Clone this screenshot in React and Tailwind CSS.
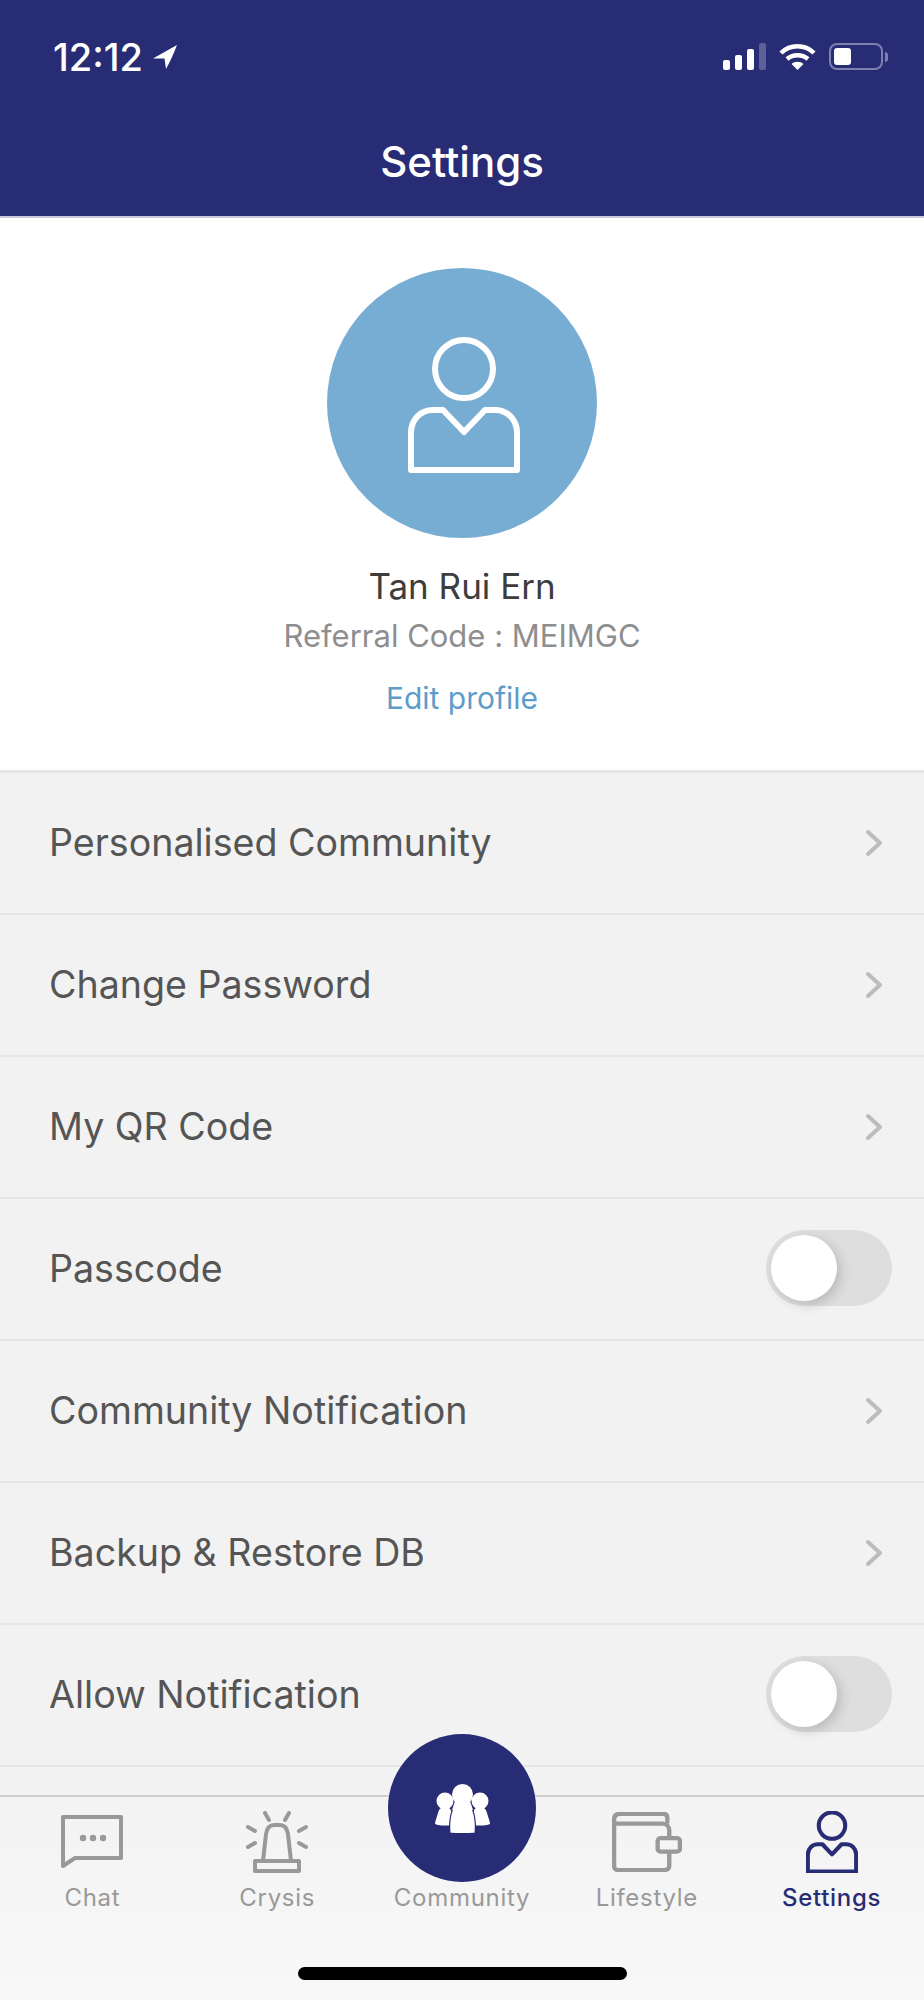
import React from 'react'

const sans = 'font-["Inter","Liberation_Sans",sans-serif]'

const rows = [
  { label: 'Personalised Community' },
  { label: 'Change Password' },
  { label: 'My QR Code' },
  { label: 'Passcode', toggle: true },
  { label: 'Community Notification' },
  { label: 'Backup & Restore DB' },
  { label: 'Allow Notification', toggle: true },
]

const PersonIcon = ({ className, strokeWidth = 6 }) => (
  <svg viewBox="0 0 112 136" fill="none" stroke="currentColor" strokeWidth={strokeWidth} strokeLinejoin="round" className={className}>
    <circle cx="56" cy="32" r="29" />
    <path d="M3 133V96c0-13 9-23 22-23h10l21 22 21-22h10c13 0 22 10 22 23v37z" />
  </svg>
)

const ChatIcon = () => (
  <svg viewBox="0 0 62 54" className="w-[62px] h-[54px] mb-[4px] text-[#999]" fill="none">
    <path d="M2 2h58v41H14L2 51z" stroke="currentColor" strokeWidth="4" strokeLinejoin="round" />
    <circle cx="22" cy="23" r="3.2" fill="currentColor" />
    <circle cx="32" cy="23" r="3.2" fill="currentColor" />
    <circle cx="42" cy="23" r="3.2" fill="currentColor" />
  </svg>
)

const SirenIcon = () => (
  <svg viewBox="0 0 64 62" className="w-[64px] h-[62px] text-[#999]" fill="none" stroke="currentColor" strokeWidth="4" strokeLinecap="round">
    <path d="M18 50l3-27c1-6 4-9 8-9h6c4 0 7 3 8 9l3 27" />
    <rect x="10" y="50" width="44" height="10" strokeLinejoin="round" />
    <path d="M20 2l4 7M44 2l-4 7M3 16l7 4M61 16l-7 4M3 36l7-4M61 36l-7-4" />
  </svg>
)

const WalletIcon = () => (
  <svg viewBox="0 0 72 62" className="w-[70px] h-[60px] mb-[1px] text-[#999]" fill="none" stroke="currentColor" strokeWidth="4.5" strokeLinejoin="round">
    <path d="M57 12V6c0-2-1-4-4-4H8C4 2 2 4 2 8v48c0 2 2 4 4 4h48c3 0 5-2 5-4V42" />
    <path d="M2 12h50c4 0 7 3 7 7v8" />
    <rect x="47" y="27" width="23" height="14" rx="3" />
  </svg>
)

// three pawn-shaped figures, the middle one in front
const CommunityIcon = () => (
  <svg viewBox="0 0 55 49" className="w-[55px] h-[49px]" fill="white">
    <circle cx="10" cy="17" r="8.5" />
    <path d="M0 40c0-3 2-7 3-11 1-4 3-6 7-6s6 2 7 6 3 8 3 11c-5 2-15 2-20 0z" />
    <circle cx="45" cy="17" r="8.5" />
    <path d="M35 40c0-3 2-7 3-11 1-4 3-6 7-6s6 2 7 6 3 8 3 11c-5 2-15 2-20 0z" />
    <path d="M15 49c-1-8 0-20 4-26h17c4 6 5 18 4 26-5 1-20 1-25 0z" stroke="#282c75" strokeWidth="1.2" />
    <circle cx="27.5" cy="10.5" r="10.5" />
    <path d="M20 17h15l3 9H17z" />
  </svg>
)

const Chevron = () => (
  <svg viewBox="0 0 18 28" className="w-[18px] h-[28px] text-[#bcbcbc]" fill="none" stroke="currentColor" strokeWidth="4" strokeLinecap="round" strokeLinejoin="round">
    <path d="M3 3l12 11L3 25" />
  </svg>
)

const Toggle = () => (
  <div className="relative w-[126px] h-[76px] mb-[2px] rounded-full bg-[#dedede]">
    <div className="absolute left-[5px] top-[5px] w-[66px] h-[66px] rounded-full bg-white shadow-[4px_4px_12px_rgba(0,0,0,0.16)]" />
  </div>
)

const TabItem = ({ icon, label, active }) => (
  <div className="flex-1 flex flex-col items-center">
    <div className="h-[62px] flex items-end">{icon}</div>
    <div className={`mt-[10px] text-[24px] leading-[30px] tracking-[0.7px] ${active ? 'text-[#282c75] font-medium' : 'text-[#999]'}`}>
      {label}
    </div>
  </div>
)

export default function App() {
  return (
    <div className={`relative w-[924px] h-[2000px] overflow-hidden bg-[#f2f2f2] flex flex-col ${sans}`}>
      {/* status bar + title */}
      <header className="h-[218px] shrink-0 bg-[#282c75] border-b-2 border-[#c9cade] text-white">
        <div className="h-[138px] flex items-start justify-between pl-[53px] pr-[36px] pt-[37px]">
          <div className="flex items-center gap-[10px]">
            <span className="text-[38px] leading-[40px] font-medium">12:12</span>
            <svg viewBox="0 0 24 24" className="w-[24px] h-[24px]" fill="white">
              <path d="M24 0L0 13.5h11.5L13 24c3-5 8-16 11-24z" />
            </svg>
          </div>
          <div className="flex items-start gap-[13px] mt-[6px]">
            <div className="flex items-end gap-[5px] h-[27px]">
              <span className="w-[7px] h-[10px] rounded-[2px] bg-white" />
              <span className="w-[7px] h-[15px] rounded-[2px] bg-white" />
              <span className="w-[7px] h-[21px] rounded-[2px] bg-white" />
              <span className="w-[7px] h-[27px] rounded-[2px] bg-white/25" />
            </div>
            <svg viewBox="0 0 37 27" className="w-[37px] h-[27px]" fill="none" stroke="white" strokeWidth="4.5">
              <path d="M2 10c9-9 24-9 33 0" />
              <path d="M8 16c6-5 15-5 21 0" />
              <path d="M18.5 27l-6-6c3-3 9-3 12 0z" fill="white" stroke="none" />
            </svg>
            <div className="flex items-center gap-[2px] h-[27px]">
              <div className="w-[54px] h-[27px] rounded-[8px] border-2 border-white/40 p-[3px]">
                <div className="w-[17px] h-full rounded-[3px] bg-white" />
              </div>
              <div className="w-[3px] h-[10px] rounded-r bg-white/40" />
            </div>
          </div>
        </div>
        <h1 className="text-center text-[42px] leading-[48px] font-medium">Settings</h1>
      </header>

      {/* profile */}
      <section className="h-[555px] shrink-0 bg-white border-b-[3px] border-[#e6e6e6] flex flex-col items-center pt-[50px]">
        <div className="w-[270px] h-[270px] rounded-full bg-[#78add3] flex items-center justify-center text-white">
          <PersonIcon className="w-[112px] h-[136px] ml-[4px] mt-[3px]" />
        </div>
        <div className="mt-[26px] text-[35px] leading-[44px] text-[#3d3d3d]">Tan Rui Ern</div>
        <div className="mt-[8px] text-[31px] leading-[40px] text-[#8e8e8e] [font-feature-settings:'calt'_0]">Referral Code : MEIMGC</div>
        <div className="mt-[24px] text-[30px] leading-[36px] text-[#5e9cc9]">Edit profile</div>
      </section>

      {/* settings rows */}
      <div className="flex-1 min-h-0">
        {rows.map((r) => (
          <div key={r.label} className="h-[142px] border-b-2 border-[#e6e6e6] flex items-center justify-between pl-[49px] pr-[32px]">
            <span className="text-[37.6px] leading-[46px] text-[#555]">{r.label}</span>
            {r.toggle ? <Toggle /> : <span className="mr-[9px]"><Chevron /></span>}
          </div>
        ))}
      </div>

      {/* tab bar */}
      <nav className="relative h-[205px] shrink-0 border-t-2 border-[#cfcfcf] bg-gradient-to-b from-[#f3f3f3] to-[#f8f8f8] pt-[14px]">
        <div className="flex">
          <TabItem icon={<ChatIcon />} label="Chat" />
          <TabItem icon={<SirenIcon />} label="Crysis" />
          <TabItem icon={<span className="w-[60px]" />} label="Community" />
          <TabItem icon={<WalletIcon />} label="Lifestyle" />
          <TabItem icon={<PersonIcon className="w-[52px] h-[62px] text-[#282c75]" strokeWidth={9} />} label="Settings" active />
        </div>
        <div className="absolute left-[388px] -top-[63px] w-[148px] h-[148px] rounded-full bg-[#282c75] flex items-center justify-center">
          <CommunityIcon />
        </div>
        <div className="absolute left-[298px] bottom-[20px] w-[329px] h-[13px] rounded-full bg-black" />
      </nav>
    </div>
  )
}
